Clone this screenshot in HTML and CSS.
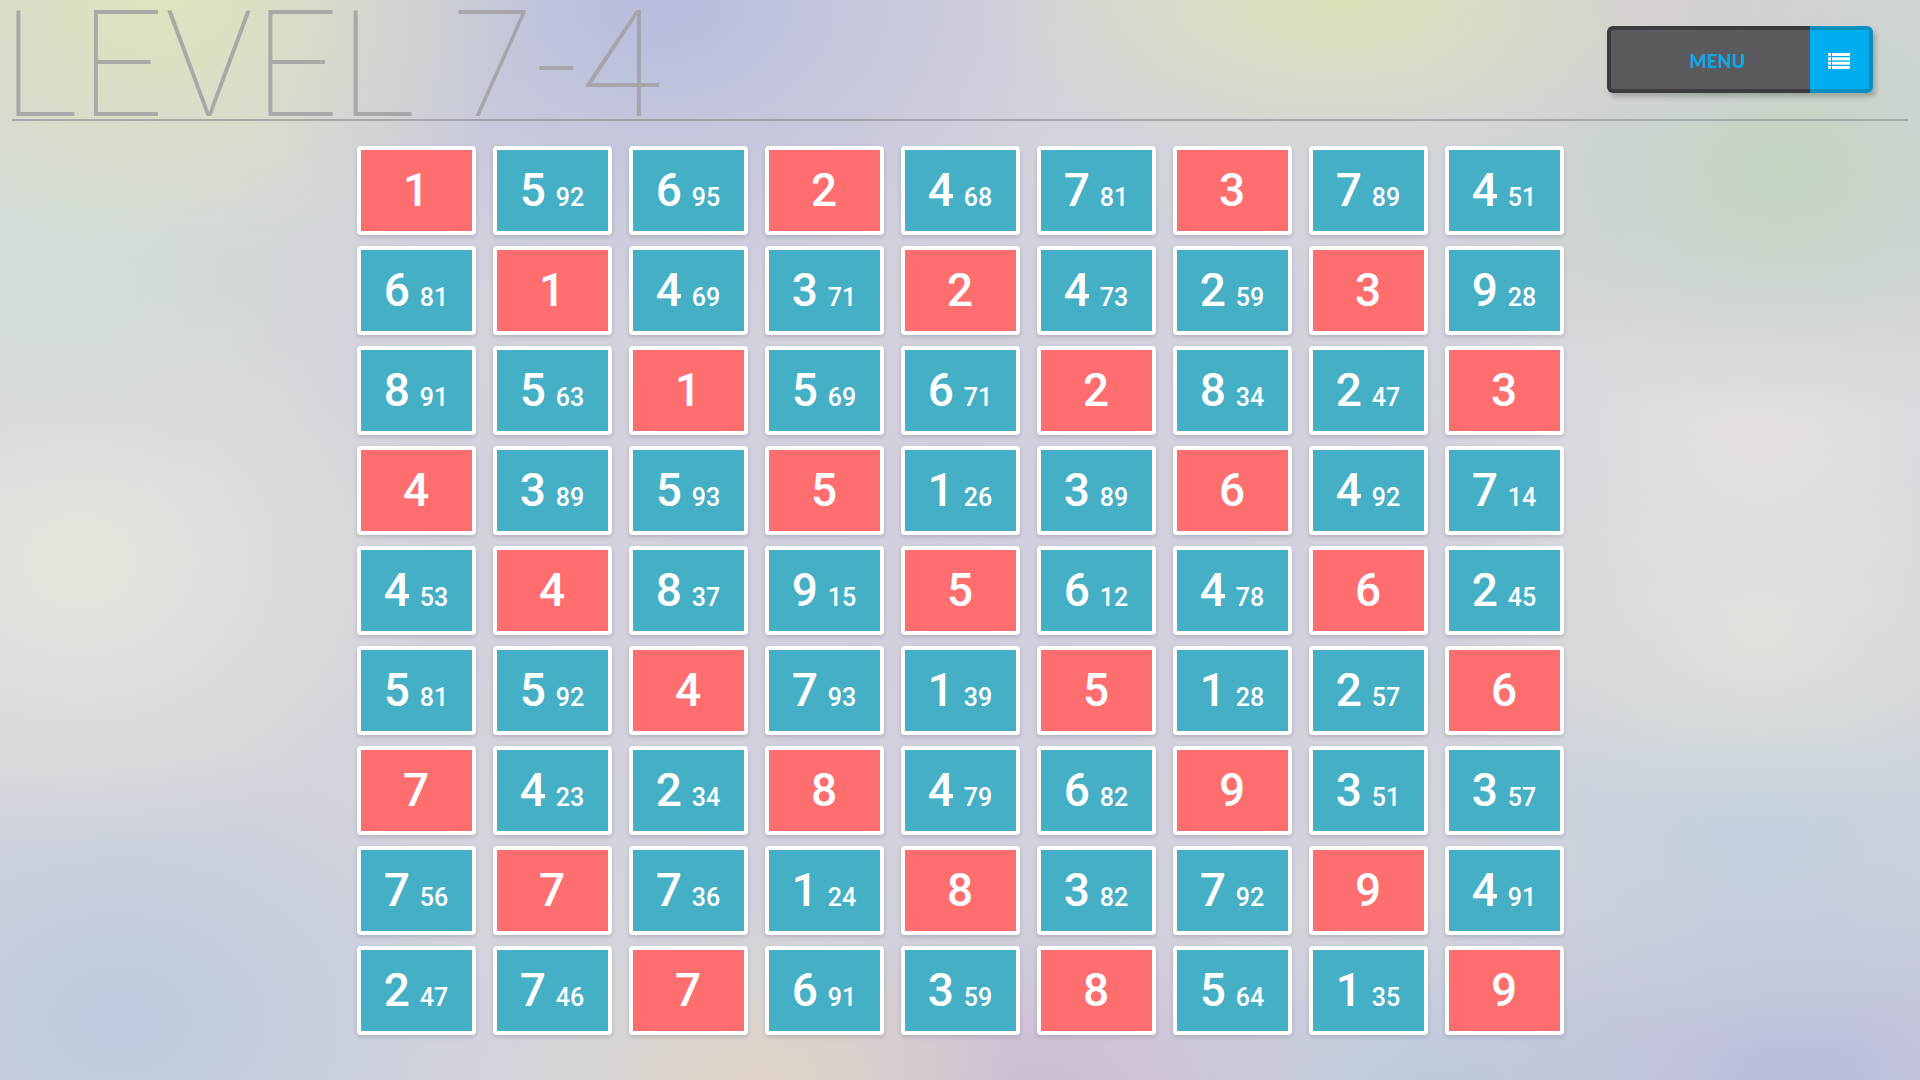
FILE: index.html
```html
<!DOCTYPE html>
<html lang="en">
<head>
<meta charset="utf-8">
<title>Level 7-4</title>
<link rel="stylesheet" href="styles.css">
</head>
<body>
<div class="page">
  <header class="header">
    <h1 class="title">LEVEL 7-4</h1>
    <div class="menu-btn">
      <div class="menu-label">MENU</div>
      <div class="menu-icon">
        <svg width="22" height="16" viewBox="0 0 22 16" aria-hidden="true">
          <g fill="#ffffff">
            <rect x="0" y="0" width="3" height="3"/>
            <rect x="4" y="0" width="18" height="3"/>
            <rect x="0" y="4.33" width="3" height="3"/>
            <rect x="4" y="4.33" width="18" height="3"/>
            <rect x="0" y="8.67" width="3" height="3"/>
            <rect x="4" y="8.67" width="18" height="3"/>
            <rect x="0" y="13" width="3" height="3"/>
            <rect x="4" y="13" width="18" height="3"/>
          </g>
        </svg>
      </div>
    </div>
  </header>
  <main class="board">
    <div class="tile red"><span class="big">1</span></div>
    <div class="tile teal"><span class="big">5</span><span class="small">92</span></div>
    <div class="tile teal"><span class="big">6</span><span class="small">95</span></div>
    <div class="tile red"><span class="big">2</span></div>
    <div class="tile teal"><span class="big">4</span><span class="small">68</span></div>
    <div class="tile teal"><span class="big">7</span><span class="small">81</span></div>
    <div class="tile red"><span class="big">3</span></div>
    <div class="tile teal"><span class="big">7</span><span class="small">89</span></div>
    <div class="tile teal"><span class="big">4</span><span class="small">51</span></div>

    <div class="tile teal"><span class="big">6</span><span class="small">81</span></div>
    <div class="tile red"><span class="big">1</span></div>
    <div class="tile teal"><span class="big">4</span><span class="small">69</span></div>
    <div class="tile teal"><span class="big">3</span><span class="small">71</span></div>
    <div class="tile red"><span class="big">2</span></div>
    <div class="tile teal"><span class="big">4</span><span class="small">73</span></div>
    <div class="tile teal"><span class="big">2</span><span class="small">59</span></div>
    <div class="tile red"><span class="big">3</span></div>
    <div class="tile teal"><span class="big">9</span><span class="small">28</span></div>

    <div class="tile teal"><span class="big">8</span><span class="small">91</span></div>
    <div class="tile teal"><span class="big">5</span><span class="small">63</span></div>
    <div class="tile red"><span class="big">1</span></div>
    <div class="tile teal"><span class="big">5</span><span class="small">69</span></div>
    <div class="tile teal"><span class="big">6</span><span class="small">71</span></div>
    <div class="tile red"><span class="big">2</span></div>
    <div class="tile teal"><span class="big">8</span><span class="small">34</span></div>
    <div class="tile teal"><span class="big">2</span><span class="small">47</span></div>
    <div class="tile red"><span class="big">3</span></div>

    <div class="tile red"><span class="big">4</span></div>
    <div class="tile teal"><span class="big">3</span><span class="small">89</span></div>
    <div class="tile teal"><span class="big">5</span><span class="small">93</span></div>
    <div class="tile red"><span class="big">5</span></div>
    <div class="tile teal"><span class="big">1</span><span class="small">26</span></div>
    <div class="tile teal"><span class="big">3</span><span class="small">89</span></div>
    <div class="tile red"><span class="big">6</span></div>
    <div class="tile teal"><span class="big">4</span><span class="small">92</span></div>
    <div class="tile teal"><span class="big">7</span><span class="small">14</span></div>

    <div class="tile teal"><span class="big">4</span><span class="small">53</span></div>
    <div class="tile red"><span class="big">4</span></div>
    <div class="tile teal"><span class="big">8</span><span class="small">37</span></div>
    <div class="tile teal"><span class="big">9</span><span class="small">15</span></div>
    <div class="tile red"><span class="big">5</span></div>
    <div class="tile teal"><span class="big">6</span><span class="small">12</span></div>
    <div class="tile teal"><span class="big">4</span><span class="small">78</span></div>
    <div class="tile red"><span class="big">6</span></div>
    <div class="tile teal"><span class="big">2</span><span class="small">45</span></div>

    <div class="tile teal"><span class="big">5</span><span class="small">81</span></div>
    <div class="tile teal"><span class="big">5</span><span class="small">92</span></div>
    <div class="tile red"><span class="big">4</span></div>
    <div class="tile teal"><span class="big">7</span><span class="small">93</span></div>
    <div class="tile teal"><span class="big">1</span><span class="small">39</span></div>
    <div class="tile red"><span class="big">5</span></div>
    <div class="tile teal"><span class="big">1</span><span class="small">28</span></div>
    <div class="tile teal"><span class="big">2</span><span class="small">57</span></div>
    <div class="tile red"><span class="big">6</span></div>

    <div class="tile red"><span class="big">7</span></div>
    <div class="tile teal"><span class="big">4</span><span class="small">23</span></div>
    <div class="tile teal"><span class="big">2</span><span class="small">34</span></div>
    <div class="tile red"><span class="big">8</span></div>
    <div class="tile teal"><span class="big">4</span><span class="small">79</span></div>
    <div class="tile teal"><span class="big">6</span><span class="small">82</span></div>
    <div class="tile red"><span class="big">9</span></div>
    <div class="tile teal"><span class="big">3</span><span class="small">51</span></div>
    <div class="tile teal"><span class="big">3</span><span class="small">57</span></div>

    <div class="tile teal"><span class="big">7</span><span class="small">56</span></div>
    <div class="tile red"><span class="big">7</span></div>
    <div class="tile teal"><span class="big">7</span><span class="small">36</span></div>
    <div class="tile teal"><span class="big">1</span><span class="small">24</span></div>
    <div class="tile red"><span class="big">8</span></div>
    <div class="tile teal"><span class="big">3</span><span class="small">82</span></div>
    <div class="tile teal"><span class="big">7</span><span class="small">92</span></div>
    <div class="tile red"><span class="big">9</span></div>
    <div class="tile teal"><span class="big">4</span><span class="small">91</span></div>

    <div class="tile teal"><span class="big">2</span><span class="small">47</span></div>
    <div class="tile teal"><span class="big">7</span><span class="small">46</span></div>
    <div class="tile red"><span class="big">7</span></div>
    <div class="tile teal"><span class="big">6</span><span class="small">91</span></div>
    <div class="tile teal"><span class="big">3</span><span class="small">59</span></div>
    <div class="tile red"><span class="big">8</span></div>
    <div class="tile teal"><span class="big">5</span><span class="small">64</span></div>
    <div class="tile teal"><span class="big">1</span><span class="small">35</span></div>
    <div class="tile red"><span class="big">9</span></div>
  </main>
</div>
</body>
</html>
```

FILE: styles.css
```css
html, body {
  margin: 0;
  padding: 0;
}

body {
  width: 1920px;
  height: 1080px;
  overflow: hidden;
  font-family: "Roboto", "Liberation Sans", sans-serif;
  background-color: #d3d4dc;
  background-image:
    radial-gradient(ellipse 380px 260px at 160px 0px, rgba(222, 228, 188, 1), rgba(222, 228, 188, 0)),
    radial-gradient(ellipse 360px 170px at 1340px 0px, rgba(220, 225, 184, 1), rgba(220, 225, 184, 0)),
    radial-gradient(ellipse 250px 140px at 1640px 0px, rgba(214, 206, 214, 1), rgba(214, 206, 214, 0)),
    radial-gradient(ellipse 430px 320px at 660px 0px, rgba(184, 188, 220, 1), rgba(184, 188, 220, 0)),
    radial-gradient(ellipse 330px 260px at 1780px 170px, rgba(196, 213, 194, 1), rgba(196, 213, 194, 0)),
    radial-gradient(ellipse 330px 230px at 1760px 430px, rgba(230, 224, 228, 1), rgba(230, 224, 228, 0)),
    radial-gradient(ellipse 300px 200px at 1760px 630px, rgba(224, 226, 218, 1), rgba(224, 226, 218, 0)),
    radial-gradient(ellipse 300px 230px at 1760px 820px, rgba(194, 208, 222, 1), rgba(194, 208, 222, 0)),
    radial-gradient(ellipse 420px 260px at 1800px 1080px, rgba(185, 188, 218, 1), rgba(185, 188, 218, 0)),
    radial-gradient(ellipse 330px 240px at 60px 260px, rgba(210, 221, 214, 1), rgba(210, 221, 214, 0)),
    radial-gradient(ellipse 360px 300px at 80px 560px, rgba(230, 229, 220, 1), rgba(230, 229, 220, 0)),
    radial-gradient(ellipse 380px 280px at 120px 1020px, rgba(188, 202, 222, 1), rgba(188, 202, 222, 0)),
    radial-gradient(ellipse 260px 170px at 760px 1090px, rgba(224, 212, 196, 1), rgba(224, 212, 196, 0)),
    radial-gradient(ellipse 320px 200px at 1040px 1090px, rgba(204, 187, 210, 1), rgba(204, 187, 210, 0)),
    radial-gradient(ellipse 300px 180px at 1420px 1090px, rgba(188, 202, 220, 1), rgba(188, 202, 220, 0)),
    radial-gradient(ellipse 600px 460px at 960px 560px, rgba(210, 206, 222, 1), rgba(210, 206, 222, 0));
}

.page {
  display: flex;
  flex-direction: column;
}

.header {
  display: flex;
  justify-content: space-between;
  align-items: flex-start;
  margin: 0 12px;
  height: 119px;
  border-bottom: 2px solid rgba(135, 135, 140, 0.6);
}

.title {
  margin: 0 0 0 -10px;
  font-family: "Roboto", "Liberation Sans", sans-serif;
  font-weight: 100;
  font-size: 148px;
  line-height: 119px;
  padding-top: 0;
  letter-spacing: 1px;
  color: rgba(160, 160, 162, 0.85);
  white-space: nowrap;
  position: relative;
  top: 6px;
}

.menu-btn {
  margin-top: 26px;
  margin-right: 35px;
  display: flex;
  width: 266px;
  height: 67px;
  border-radius: 6px;
  box-shadow: 3px 4px 5px rgba(60, 60, 60, 0.3);
}

.menu-label {
  flex: 1;
  display: flex;
  align-items: center;
  justify-content: center;
  padding-left: 14px;
  background: #5b5b5f;
  border: 4px solid #3c3c3f;
  border-right: none;
  border-radius: 6px 0 0 6px;
  color: #0aa9e8;
  font-family: "Lato", "Roboto", sans-serif;
  font-weight: 900;
  font-size: 18px;
  letter-spacing: 0.3px;
  padding-top: 2px;
}

.menu-icon {
  width: 63px;
  display: flex;
  align-items: center;
  justify-content: center;
  padding-top: 3px;
  box-sizing: border-box;
  background: #00aeef;
  border: 4px solid #0b8ec0;
  border-left: none;
  border-radius: 0 6px 6px 0;
}

.menu-icon svg {
  display: block;
  margin-right: 2px;
}

.board {
  align-self: center;
  margin-top: 25px;
  display: grid;
  grid-template-columns: repeat(9, 119px);
  grid-auto-rows: 89px;
  column-gap: 17px;
  row-gap: 11px;
}

.tile {
  box-sizing: border-box;
  display: flex;
  align-items: baseline;
  justify-content: center;
  gap: 10px;
  border: 4px solid #ffffff;
  border-radius: 4px;
  box-shadow: 0 2px 4px rgba(70, 70, 90, 0.22);
  color: #ffffff;
  line-height: 81px;
}

.tile.red {
  background: #ff6e6e;
}

.tile.teal {
  background: #45afc5;
}

.big {
  font-size: 46px;
  font-weight: 500;
}

.small {
  font-size: 25px;
  font-weight: 500;
}
```
